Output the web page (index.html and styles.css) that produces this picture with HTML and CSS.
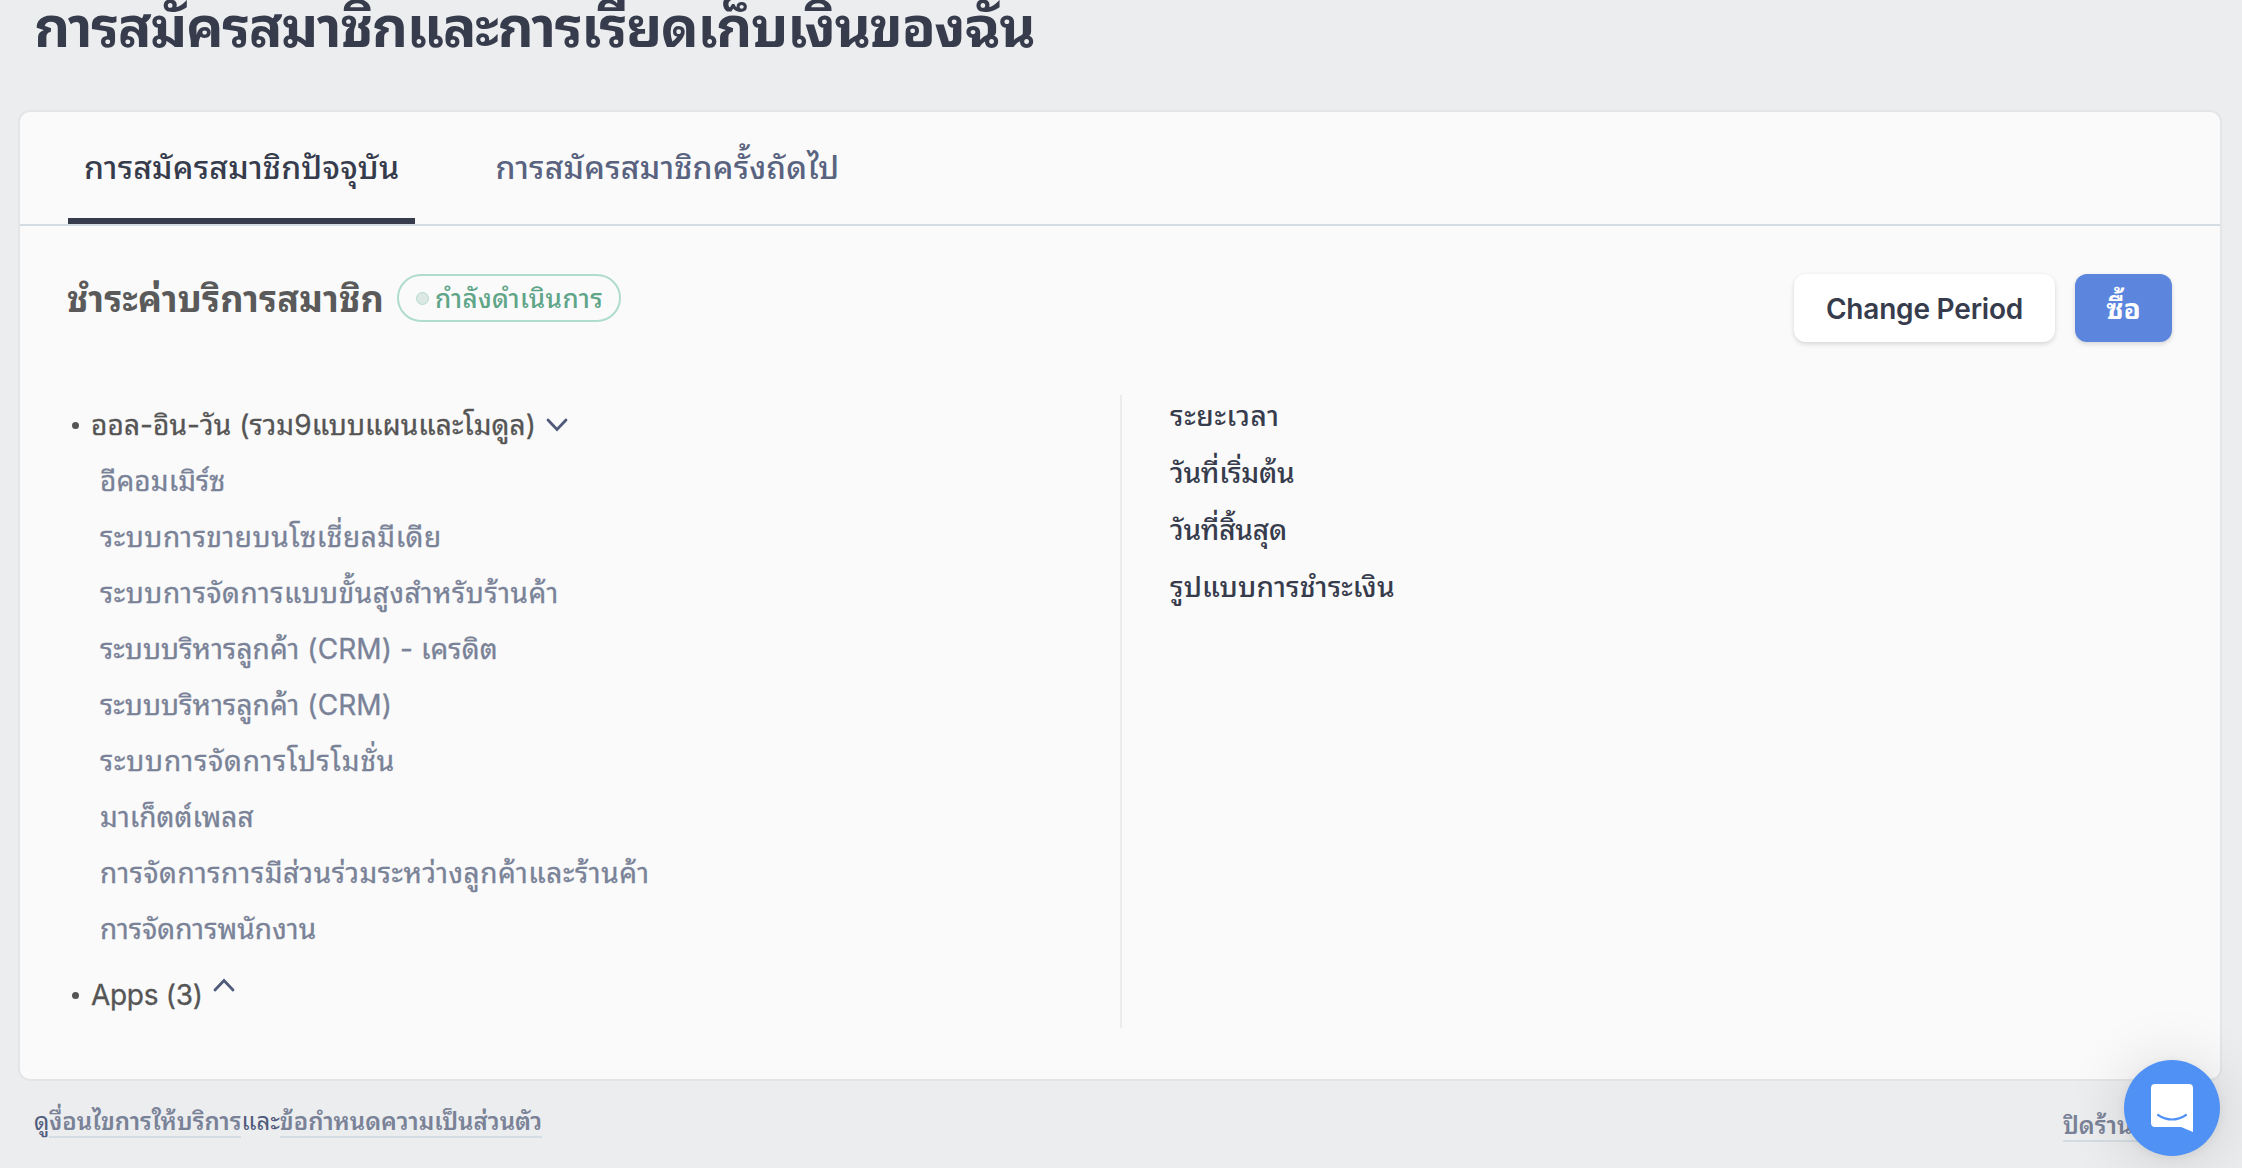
FILE: index.html
```
<!DOCTYPE html>
<html lang="th">

<head>
    <meta charset="utf-8">
    <meta name="viewport" content="width=device-width, initial-scale=1">
    <title>การสมัครสมาชิก</title>
    <link rel="stylesheet" href="styles.css">
</head>

<body>
    <h1>การสมัครสมาชิกและการเรียดเก็บเงินของฉัน</h1>

    <div class="card">
        <div class="tabs">
            <a class="tab active">การสมัครสมาชิกปัจจุบัน</a>
            <a class="tab">การสมัครสมาชิกครั้งถัดไป</a>
        </div>

        <div class="cardHeader">
            <h2>ชำระค่าบริการสมาชิก</h2>
            <div class="badge"><i class="dot"></i><span>กำลังดำเนินการ</span></div>
            <div class="buttons">
                <button class="btn">Change Period</button>
                <button class="btn primary">ซื้อ</button>
            </div>
        </div>

        <div class="columns">
            <div class="plan">
                <div class="planRow">
                    <i class="bullet"></i>
                    <span class="planName">ออล-อิน-วัน (รวม9แบบแผนและโมดูล)</span>
                    <svg class="chevron" viewBox="0 0 22 14"><path d="M2 2l9 9.500 9-9.500" /></svg>
                </div>
                <ul class="modules">
                    <li>อีคอมเมิร์ซ</li>
                    <li class="wide">ระบบการขายบนโซเชี่ยลมีเดีย</li>
                    <li class="wide">ระบบการจัดการแบบขั้นสูงสำหรับร้านค้า</li>
                    <li>ระบบบริหารลูกค้า (CRM) - เครดิต</li>
                    <li>ระบบบริหารลูกค้า (CRM)</li>
                    <li class="wider">ระบบการจัดการโปรโมชั่น</li>
                    <li>มาเก็ตต์เพลส</li>
                    <li class="wide">การจัดการการมีส่วนร่วมระหว่างลูกค้าและร้านค้า</li>
                    <li>การจัดการพนักงาน</li>
                </ul>
                <div class="planRow apps">
                    <i class="bullet"></i>
                    <span>Apps (3)</span>
                    <svg class="chevron up" viewBox="0 0 22 14"><path d="M2 12l9-9.500 9 9.500" /></svg>
                </div>
            </div>
            <ul class="details">
                <li class="wider">ระยะเวลา</li>
                <li>วันที่เริ่มต้น</li>
                <li>วันที่สิ้นสุด</li>
                <li class="wide">รูปแบบการชำระเงิน</li>
            </ul>
        </div>
    </div>

    <div class="footer">
        <div class="terms">ดู<a>งื่อนไขการให้บริการ</a>และ<a>ข้อกำหนดความเป็นส่วนตัว</a></div>
        <a class="closeShop">ปิดร้านค้า</a>
    </div>

    <div class="chat">
        <svg viewBox="0 0 42 48">
            <path fill="#fff" d="M4 0h34a4 4 0 0 1 4 4v44l-12-5H4a4 4 0 0 1-4-4V4a4 4 0 0 1 4-4z" />
            <path fill="none" stroke="#5091f5" stroke-width="2.200" stroke-linecap="round" d="M7 31q14 9 28 0" />
        </svg>
    </div>
</body>

</html>
```
FILE: styles.css
```
* {
    box-sizing: border-box;
}

body {
    margin: 0;
    height: 1168px;
    overflow: hidden;
    background: #ecedef;
    color: #373c4d;
    font-family: Inter, "Noto Sans Thai Looped", "Noto Looped Thai", "Noto Sans Thai", sans-serif;
    font-size: 28px;
}

h1 {
    margin: 0 0 48px 34px;
    height: 62px;
    line-height: 54px;
    font-size: 56px;
    letter-spacing: -1.4px;
    white-space: nowrap;
}

ul {
    list-style: none;
    margin: 0;
    padding: 0;
}

.card {
    width: 2204px;
    height: 971px;
    margin-left: 18px;
    border: 2px solid #e4e5e7;
    border-radius: 12px;
    background: #fafafa;
}

.tabs {
    display: flex;
    gap: 64px;
    height: 114px;
    padding-left: 48px;
    border-bottom: 2px solid #d5dde4;
}

.tab {
    height: 112px;
    padding: 0 16px;
    line-height: 112px;
    font-size: 32px;
    font-weight: 500;
    letter-spacing: 0.2px;
    color: #596380;
}

.tab.active {
    color: #373c4d;
    border-bottom: 6px solid #373c4d;
}

.cardHeader {
    display: flex;
    height: 120px;
    margin: 48px 48px 0;
}

h2 {
    width: 329px;
    margin: 0;
    line-height: 50px;
    font-size: 36px;
    letter-spacing: 0.15px;
    text-indent: -1px;
    white-space: nowrap;
    color: #5a5a5a;
}

.badge {
    display: flex;
    align-items: center;
    width: 224px;
    height: 48px;
    padding-left: 17px;
    border: 2px solid #b0dccb;
    border-radius: 24px;
    color: #60a588;
    font-size: 26px;
    font-weight: 500;
    letter-spacing: 0.4px;
    white-space: nowrap;
}

.badge span {
    padding-bottom: 4px;
}

.dot {
    width: 13px;
    height: 13px;
    margin-right: 6px;
    border: 1px solid #b5dccb;
    border-radius: 50%;
    background: #dbe8e3;
}

.buttons {
    display: flex;
    gap: 20px;
    margin-left: auto;
}

.btn {
    width: 261px;
    height: 68px;
    padding: 2px 0 0;
    border: none;
    border-radius: 12px;
    background: #fff;
    color: #373c4d;
    font: inherit;
    font-weight: 600;
    letter-spacing: -0.2px;
    box-shadow: 0 2px 5px rgba(0, 0, 0, 0.15);
}

.btn.primary {
    width: 97px;
    padding: 0 0 3px;
    background: #5c86de;
    color: #fff;
    font-weight: 700;
}

.columns {
    display: grid;
    grid-template-columns: 1052px 1fr;
    height: 633px;
    margin: 1px 48px 0;
}

.plan {
    color: #555;
    letter-spacing: 0.1px;
    -webkit-text-stroke: 0.3px;
}

.planRow {
    display: flex;
    align-items: center;
    height: 56px;
    padding: 0 0 0 4px;
    margin-top: 2px;
}

.planName {
    padding-bottom: 5px;
}

.bullet {
    width: 7px;
    height: 7px;
    margin-right: 12px;
    border-radius: 50%;
    background: #555;
}

.chevron {
    width: 22px;
    height: 14px;
    margin-left: 10px;
    fill: none;
    stroke: #505b7c;
    stroke-width: 2.800;
    stroke-linecap: round;
}

.chevron.up {
    margin-bottom: 20px;
}

.modules li {
    height: 56px;
    line-height: 56px;
    padding-left: 32px;
    color: #798297;
}

.modules .wide {
    letter-spacing: 0.55px;
}

.modules .wider {
    letter-spacing: 0.8px;
}

.apps {
    margin-top: 10px;
    letter-spacing: -0.3px;
}

.details {
    padding-left: 48px;
    border-left: 2px solid #ececee;
}

.details li {
    height: 57px;
    line-height: 42px;
    font-weight: 500;
    letter-spacing: -0.25px;
}

.details .wide {
    letter-spacing: 0.2px;
}

.details .wider {
    letter-spacing: 0.7px;
}

.footer {
    display: flex;
    justify-content: space-between;
    padding: 27px 44px 0 34px;
    font-size: 24px;
    color: #505b7c;
    line-height: 28px;
}

.footer a {
    display: inline-block;
    color: #798297;
    font-weight: 600;
    border-bottom: 2px solid #d5dde4;
}

.footer .closeShop {
    width: 135px;
    margin-top: 4px;
    white-space: nowrap;
}

.chat {
    position: fixed;
    right: 22px;
    bottom: 12px;
    width: 96px;
    height: 96px;
    border-radius: 50%;
    background: #5091f5;
    box-shadow: 0 2px 12px rgba(0, 0, 0, 0.08), 0 4px 64px rgba(0, 0, 0, 0.14);
}

.chat svg {
    display: block;
    width: 42px;
    height: 48px;
    margin: 24px 27px;
}
```
